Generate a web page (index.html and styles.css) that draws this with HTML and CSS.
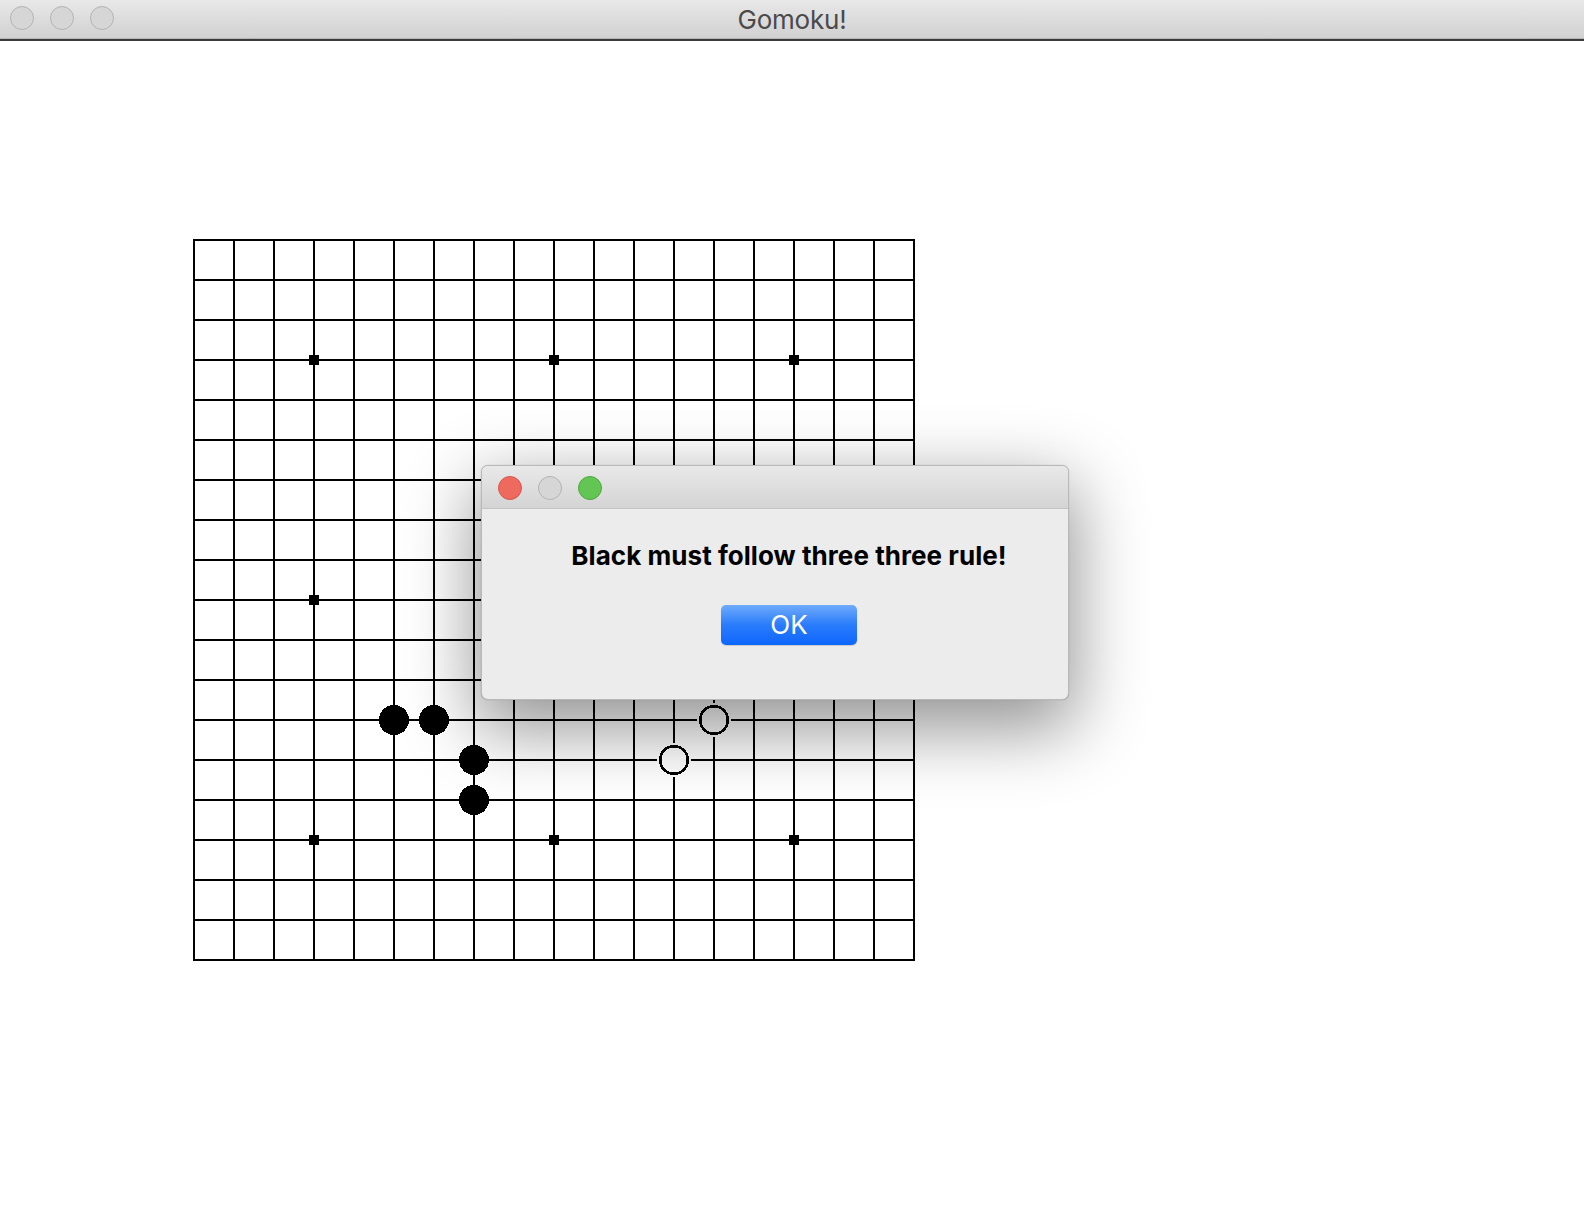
FILE: index.html
```html
<!DOCTYPE html>
<html>
<head>
<meta charset="utf-8">
<title>Gomoku!</title>
<link rel="stylesheet" href="styles.css">
</head>
<body>
<div class="window">
  <div class="titlebar">
    <div class="lights">
      <span class="light gray"></span>
      <span class="light gray"></span>
      <span class="light gray"></span>
    </div>
    <div class="title">Gomoku!</div>
  </div>
  <div class="content">
    <svg class="board" width="724" height="724" viewBox="0 0 724 724" shape-rendering="crispEdges">
      <g stroke="#000" stroke-width="2">
        <line x1="1" y1="0" x2="1" y2="722"/><line x1="41" y1="0" x2="41" y2="722"/><line x1="81" y1="0" x2="81" y2="722"/><line x1="121" y1="0" x2="121" y2="722"/><line x1="161" y1="0" x2="161" y2="722"/><line x1="201" y1="0" x2="201" y2="722"/><line x1="241" y1="0" x2="241" y2="722"/><line x1="281" y1="0" x2="281" y2="722"/><line x1="321" y1="0" x2="321" y2="722"/><line x1="361" y1="0" x2="361" y2="722"/><line x1="401" y1="0" x2="401" y2="722"/><line x1="441" y1="0" x2="441" y2="722"/><line x1="481" y1="0" x2="481" y2="722"/><line x1="521" y1="0" x2="521" y2="722"/><line x1="561" y1="0" x2="561" y2="722"/><line x1="601" y1="0" x2="601" y2="722"/><line x1="641" y1="0" x2="641" y2="722"/><line x1="681" y1="0" x2="681" y2="722"/><line x1="721" y1="0" x2="721" y2="722"/>
        <line y1="1" x1="0" y2="1" x2="722"/><line y1="41" x1="0" y2="41" x2="722"/><line y1="81" x1="0" y2="81" x2="722"/><line y1="121" x1="0" y2="121" x2="722"/><line y1="161" x1="0" y2="161" x2="722"/><line y1="201" x1="0" y2="201" x2="722"/><line y1="241" x1="0" y2="241" x2="722"/><line y1="281" x1="0" y2="281" x2="722"/><line y1="321" x1="0" y2="321" x2="722"/><line y1="361" x1="0" y2="361" x2="722"/><line y1="401" x1="0" y2="401" x2="722"/><line y1="441" x1="0" y2="441" x2="722"/><line y1="481" x1="0" y2="481" x2="722"/><line y1="521" x1="0" y2="521" x2="722"/><line y1="561" x1="0" y2="561" x2="722"/><line y1="601" x1="0" y2="601" x2="722"/><line y1="641" x1="0" y2="641" x2="722"/><line y1="681" x1="0" y2="681" x2="722"/><line y1="721" x1="0" y2="721" x2="722"/>
      </g>
      <g fill="#000">
        <rect x="116" y="116" width="10" height="10"/><rect x="356" y="116" width="10" height="10"/><rect x="596" y="116" width="10" height="10"/>
        <rect x="116" y="356" width="10" height="10"/><rect x="356" y="356" width="10" height="10"/><rect x="596" y="356" width="10" height="10"/>
        <rect x="116" y="596" width="10" height="10"/><rect x="356" y="596" width="10" height="10"/><rect x="596" y="596" width="10" height="10"/>
      </g>
      <g fill="#000">
        <circle cx="201" cy="481" r="15"/>
        <circle cx="241" cy="481" r="15"/>
        <circle cx="281" cy="521" r="15"/>
        <circle cx="281" cy="561" r="15"/>
      </g>
      <g>
        <circle cx="521" cy="481" r="17" fill="#fff"/>
        <circle cx="521" cy="481" r="13.8" fill="#fff" stroke="#000" stroke-width="2.6"/>
        <circle cx="481" cy="521" r="17" fill="#fff"/>
        <circle cx="481" cy="521" r="13.8" fill="#fff" stroke="#000" stroke-width="2.6"/>
      </g>
    </svg>
  </div>
</div>

<div class="dialog">
  <div class="dialog-titlebar">
    <span class="light red"></span>
    <span class="light gray"></span>
    <span class="light green"></span>
  </div>
  <div class="dialog-body">
    <p class="message">Black must follow three three rule!</p>
    <button class="ok">OK</button>
  </div>
</div>
</body>
</html>
```

FILE: styles.css
```css
html, body {
  margin: 0;
  padding: 0;
  background: #fff;
  width: 1584px;
  height: 1232px;
  overflow: hidden;
  font-family: Inter, "Liberation Sans", sans-serif;
}

.window {
  display: flex;
  flex-direction: column;
}

.titlebar {
  position: relative;
  height: 38px;
  background: linear-gradient(#e8e8e8, #d1d1d1);
  border-bottom: 1px solid #b4b4b4;
  box-shadow: 0 2px 0 #3a3a3a;
  display: flex;
  align-items: center;
  justify-content: center;
}

.lights {
  position: absolute;
  left: 10px;
  top: 6px;
  display: flex;
  gap: 16px;
}

.light {
  display: block;
  width: 24px;
  height: 24px;
  border-radius: 50%;
  box-sizing: border-box;
}

.light.gray {
  background: #d6d6d6;
  border: 1px solid #b3b3b3;
}

.light.red {
  background: #ee6a5f;
  border: 1px solid #d5574c;
}

.light.green {
  background: #62c554;
  border: 1px solid #50a840;
}

.title {
  font-size: 26px;
  color: #4a4a4a;
  letter-spacing: -0.2px;
}

.content {
  padding-top: 200px;
  padding-left: 193px;
}

.board {
  display: block;
}

.dialog {
  position: absolute;
  left: 481px;
  top: 465px;
  width: 588px;
  height: 235px;
  box-sizing: border-box;
  border: 1px solid #b9b9b9;
  border-radius: 7px;
  background: #ececec;
  overflow: hidden;
  box-shadow: 0 24px 70px 6px rgba(0, 0, 0, 0.42), 0 0 1px rgba(0,0,0,0.3);
  display: flex;
  flex-direction: column;
}

.dialog-titlebar {
  height: 43px;
  box-sizing: border-box;
  background: linear-gradient(#e9e9e9, #d4d4d4);
  border-bottom: 1px solid #c3c3c3;
  display: flex;
  align-items: center;
  gap: 16px;
  padding-left: 16px;
  padding-top: 1px;
}

.dialog-body {
  flex: 1;
  display: flex;
  flex-direction: column;
  align-items: center;
  padding-left: 28px;
}

.message {
  margin: 31px 0 0 0;
  font-size: 26px;
  font-weight: 700;
  line-height: 32px;
  letter-spacing: 0.05px;
  color: #000;
}

.ok {
  margin-top: 33px;
  width: 136px;
  height: 40px;
  border: none;
  border-radius: 5px;
  background: linear-gradient(#70abfb, #2a7cfb 50%, #0d66fe);
  box-shadow: 0 1px 1px rgba(0,0,0,0.15);
  color: #fff;
  font-family: Inter, "Liberation Sans", sans-serif;
  font-size: 26px;
  padding: 0;
  line-height: 40px;
}
```
